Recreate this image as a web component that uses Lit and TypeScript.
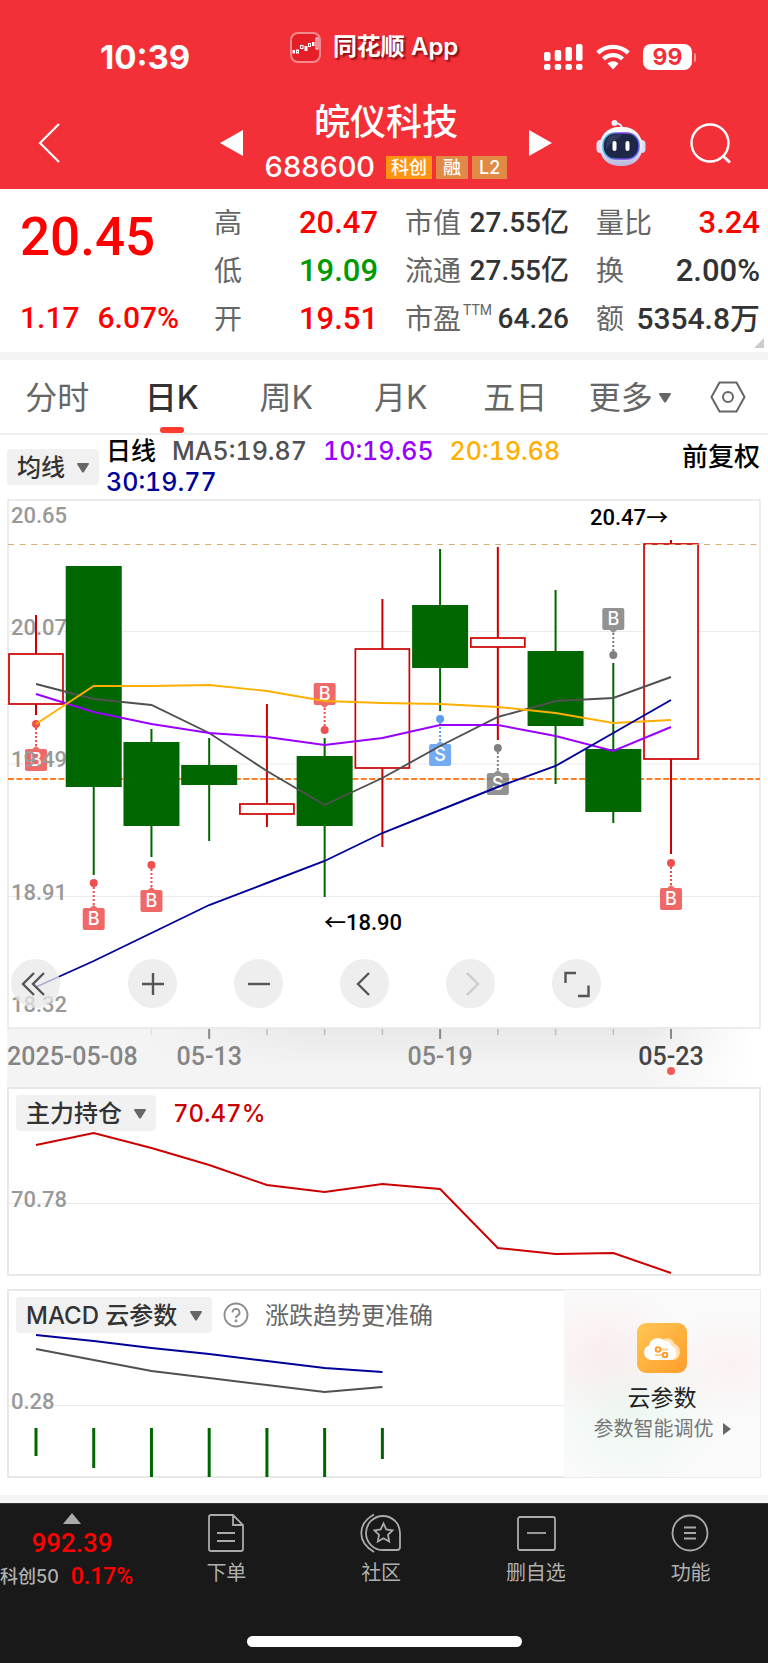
import { LitElement, html, svg, css } from "lit";
import { customElement, state } from "lit/decorators.js";

/* Candle centres are evenly spaced across every chart panel. */
const FIRST = 29;
const STEP = 57.73;
const cx = (i: number) => FIRST + STEP * i;
const points = (ys: number[]) => ys.map((y, i) => `${cx(i).toFixed(1)},${y}`).join(" ");

const RED = "#cc0000";
const GREEN = "#006600";

type Candle = { up: boolean; high: number; top: number; bottom: number; low: number };
const candle = (up: boolean, high: number, top: number, bottom: number, low: number): Candle => ({ up, high, top, bottom, low });
const CANDLES: Candle[] = [
  candle(true, 116, 155, 205, 216),
  candle(false, 67, 67, 288, 376),
  candle(false, 230, 243, 327, 358),
  candle(false, 239, 266, 286, 342),
  candle(true, 205, 305, 315, 328),
  candle(false, 239, 257, 327, 398),
  candle(true, 100, 150, 269, 348),
  candle(false, 50, 106, 169, 212),
  candle(true, 48, 139, 148, 241),
  candle(false, 91, 152, 227, 285),
  candle(false, 164, 250, 313, 324),
  candle(true, 41, 45, 260, 355),
];

const AVERAGES = [
  { color: "#505050", ys: [185, 200, 206, 234, 272, 306, 279, 247, 218, 202, 199, 178] },
  { color: "#9900ff", ys: [195, 213, 225, 234, 238, 246, 239, 226, 226, 237, 252, 228] },
  { color: "#ffaf00", ys: [225, 187, 187, 186, 192, 202, 204, 205, 208, 214, 224, 221] },
  { color: "#000099", ys: [488, 462, 434, 406, 384, 362, 334, 311, 288, 267, 234, 201] },
];

type Mark = { i: number; dot: number; text: string; above?: boolean; color: string };
const MARKS: Mark[] = [
  { i: 0, dot: 225, text: "B", color: "#ee4f4f" },
  { i: 1, dot: 384, text: "B", color: "#ee4f4f" },
  { i: 2, dot: 366, text: "B", color: "#ee4f4f" },
  { i: 5, dot: 231, text: "B", above: true, color: "#ee4f4f" },
  { i: 7, dot: 220, text: "S", color: "#5a9df0" },
  { i: 8, dot: 249, text: "S", color: "#808080" },
  { i: 10, dot: 156, text: "B", above: true, color: "#808080" },
  { i: 11, dot: 364, text: "B", color: "#ee4f4f" },
];

const PRICE_LABELS: [string, number][] = [["20.65", 24], ["20.07", 136], ["19.49", 268], ["18.91", 401], ["18.32", 513]];

const down = html`<svg class="caret" viewBox="0 0 12 10" aria-hidden="true"><path d="M0 1Q0 0 1 0H11Q12 0 12 1L7 9Q6 10 5 9Z" fill="#666" /></svg>`;

@customElement("kline-chart")
export class KlineChart extends LitElement {
  static styles = css`
    :host { display: block; position: relative; }
    .plot { display: block; width: 100%; height: auto; }
    .label { font: 500 22px Roboto, sans-serif; fill: #999; }
    .peak { font: 500 22px Roboto, "Noto Sans CJK SC", sans-serif; fill: #000; }
    .mark { font: 500 18px Inter, sans-serif; fill: #fff; text-anchor: middle; }
    .date { font: 500 25px Roboto, sans-serif; fill: #858585; text-anchor: middle; }
    .date.first { text-anchor: start; }
    .date.current { fill: #444; }
    .tools { position: absolute; left: 4px; top: 460px; display: flex; gap: 57px; }
    .tool { width: 49px; height: 49px; border: 0; border-radius: 50%; padding: 0; background: rgba(232, 232, 232, 0.75); display: grid; place-items: center; }
    .tool:first-child { margin-right: 11px; }
    .tool svg { width: 30px; height: 30px; fill: none; stroke: #555; stroke-width: 2.4; }
    .tool:disabled svg { stroke: #ccc; }
  `;

  private mark(m: Mark) {
    const x = cx(m.i);
    const top = m.above ? m.dot - 47 : m.dot + 25;
    const tip = m.above
      ? `M${x - 5} ${top + 21}L${x} ${top + 25}L${x + 5} ${top + 21}Z`
      : `M${x - 5} ${top + 1}L${x} ${top - 3}L${x + 5} ${top + 1}Z`;
    const from = m.above ? m.dot - 22 : m.dot + 4;
    return svg`
      <circle cx=${x} cy=${m.dot} r="4" fill=${m.color} />
      <path d="M${x} ${from}V${from + 18}" stroke=${m.color} stroke-width="2" stroke-dasharray="2 2" />
      <g opacity="0.85"><rect x=${x - 11} y=${top} width="22" height="22" rx="2" fill=${m.color} /><path d=${tip} fill=${m.color} /></g>
      <text class="mark" x=${x} y=${top + 17}>${m.text}</text>`;
  }

  private bar(c: Candle, i: number) {
    const x = cx(i);
    const color = c.up ? RED : GREEN;
    return svg`
      <path d="M${x} ${c.high}V${c.top}M${x} ${c.bottom}V${c.low}" stroke=${color} stroke-width="2" />
      <rect x=${x - (c.up ? 27 : 28)} y=${c.top} width=${c.up ? 54 : 56} height=${c.bottom - c.top}
        fill=${c.up ? "#fff" : color} stroke=${c.up ? color : "none"} stroke-width="1.7" />`;
  }

  render() {
    return html`
      <svg class="plot" viewBox="0 0 754 588" role="img" aria-label="日K线图">
        <defs>
          <linearGradient id="axis" x1="0" y1="0" x2="0" y2="1"><stop offset="0" stop-color="#e9e9e9" /><stop offset="0.7" stop-color="#f4f4f4" /></linearGradient>
          <linearGradient id="fadeL"><stop offset="0.18" stop-color="#f4f4f4" /><stop offset="0.4" stop-color="#f4f4f4" stop-opacity="0" /></linearGradient>
          <linearGradient id="fadeR"><stop offset="0.84" stop-color="#fff" stop-opacity="0" /><stop offset="0.99" stop-color="#fff" /></linearGradient>
        </defs>
        <rect y="529" width="754" height="59" fill="url(#axis)" />
        <rect y="529" width="754" height="59" fill="url(#fadeL)" />
        <rect y="529" width="754" height="59" fill="url(#fadeR)" />
        <rect x="1" y="1" width="752" height="528" fill="#fff" stroke="#e8e8e8" stroke-width="1.6" />
        <path d="M1 132.5H753M1 265H753M1 397.5H753" stroke="#ebebeb" />
        <path d="M1 280H753" stroke="#ff7f27" stroke-width="2" stroke-dasharray="6 2.4" />
        ${MARKS.map((m) => this.mark(m))}
        ${PRICE_LABELS.map(([t, y]) => svg`<text class="label" x="4" y=${y}>${t}</text>`)}
        ${CANDLES.map((c, i) => this.bar(c, i))}
        <path d="M1 45.5H753" stroke="#d9ad74" stroke-width="1.2" stroke-dasharray="6 5.6" />
        ${AVERAGES.map((a) => svg`<polyline points=${points(a.ys)} fill="none" stroke=${a.color} stroke-width="1.9" />`)}
        <text class="peak" x="583" y="26">20.47→</text>
        <text class="peak" x="317" y="431">←18.90</text>
        ${CANDLES.map((_, i) => {
          if (i < 2) return "";
          const major = i % 4 === 3;
          return svg`<path d="M${cx(i)} 530v${major ? 10 : 6}" stroke=${major ? "#888" : i === 2 ? "#e2e2e2" : "#bbb"} stroke-width=${major ? 2 : 1.5} />`;
        })}
        <text class="date first" x="0" y="566">2025-05-08</text>
        <text class="date" x=${cx(3)} y="566">05-13</text>
        <text class="date" x=${cx(7)} y="566">05-19</text>
        <text class="date current" x=${cx(11)} y="566">05-23</text>
        <circle cx=${cx(11)} cy="572" r="4" fill="#f55a5a" />
      </svg>
      <div class="tools">
        <button class="tool" aria-label="最早"><svg viewBox="0 0 30 30"><path d="M13 4L2 15L13 26M23 4L12 15L23 26" /></svg></button>
        <button class="tool" aria-label="放大"><svg viewBox="0 0 30 30"><path d="M15 4V26M4 15H26" /></svg></button>
        <button class="tool" aria-label="缩小"><svg viewBox="0 0 30 30"><path d="M4 15H26" /></svg></button>
        <button class="tool" aria-label="前移"><svg viewBox="0 0 30 30"><path d="M19 4L8 15L19 26" /></svg></button>
        <button class="tool" aria-label="后移" disabled><svg viewBox="0 0 30 30"><path d="M11 4L22 15L11 26" /></svg></button>
        <button class="tool" aria-label="全屏"><svg viewBox="0 0 30 30"><path d="M3.5 14V4H14M16 27H26.5V16.5" /></svg></button>
      </div>`;
  }
}

@customElement("app-root")
export class AppRoot extends LitElement {
  @state() private tab = "日K";

  static styles = css`
    :host { display: block; background: #fff; font-family: Inter, "Noto Sans CJK SC", sans-serif; color: #333; min-height: 100vh; }
    * { box-sizing: border-box; }
    button, select { font: inherit; color: inherit; background: none; border: 0; padding: 0; margin: 0; }
    svg { display: block; }

    .top { background: #f32f38; color: #fff; }
    .status { display: flex; align-items: center; height: 92px; padding: 22px 72px 0 100px; }
    .time { font-size: 33px; font-weight: 700; line-height: 40px; }
    .brand { display: flex; align-items: center; gap: 12px; margin: 0 auto 20px; padding-left: 14px; font-size: 24px; font-weight: 600; line-height: 32px; text-shadow: 2px 2px 2px rgba(80, 0, 0, 0.7); }
    .logo { width: 31px; height: 31px; }
    .signals { display: flex; align-items: center; gap: 13px; }
    .cells { width: 39px; height: 26px; }
    .wifi { width: 34px; height: 26px; }
    .battery { display: flex; align-items: center; gap: 2px; }
    .charge { width: 49px; height: 26px; border-radius: 8px; background: #fff; color: #f32f38; font-size: 23px; font-weight: 700; line-height: 26px; text-align: center; }
    .nub { width: 2px; height: 9px; border-radius: 0 2px 2px 0; background: #f9979b; }

    .title-bar { display: grid; grid-template-columns: 1fr auto 1fr; gap: 22px; align-items: center; height: 97px; padding-left: 4px; }
    .left, .right { display: flex; align-items: center; justify-content: space-between; padding: 4px 0 0; }
    .left { padding-left: 33px; }
    .right { padding-right: 36px; }
    .back { width: 24px; height: 42px; }
    .arrow { width: 23px; height: 26px; }
    .robot { width: 50px; height: 48px; }
    .search { width: 42px; height: 42px; }
    .title { padding-top: 2px; }
    .name { margin: 0 0 5px; font-size: 36px; font-weight: 500; line-height: 46px; text-align: center; }
    .code-row { display: flex; align-items: center; gap: 4px; }
    .code { font-size: 29px; font-weight: 500; line-height: 34px; margin-right: 7px; }
    .chip { background: #e08a45; font-size: 18px; font-weight: 500; line-height: 23px; padding: 0 7px; }
    .chip.hot { background: #ff9413; padding: 0 5px; }

    .quote { display: flex; padding: 11px 8px 8px 20px; font-family: Roboto, "Noto Sans CJK SC", sans-serif; position: relative; }
    .last { width: 194px; display: flex; flex-direction: column; justify-content: space-between; color: #f00; }
    .price { font-size: 53px; font-weight: 500; line-height: 74px; }
    .change { display: flex; gap: 18px; font-size: 30px; font-weight: 500; line-height: 44px; padding-bottom: 4px; }
    .facts { flex: 1; display: grid; grid-template-columns: repeat(3, 1fr); column-gap: 27px; margin: 0; }
    .fact { display: flex; justify-content: space-between; align-items: center; height: 48px; white-space: nowrap; }
    .fact dt { font-size: 28px; color: #666; line-height: 48px; }
    .fact dd { margin: 0; font-size: 31px; font-weight: 500; line-height: 46px; padding-bottom: 2px; }
    .fact .mid { font-size: 28px; }
    .fact .large { font-size: 30px; }
    .ttm { font-size: 14px; line-height: 14px; vertical-align: 14px; margin-left: 2px; }
    .rise { color: #f00; }
    .fall { color: #009900; }
    .corner { position: absolute; right: 4px; bottom: 4px; width: 10px; height: 10px; }
    .band { height: 8px; background: #f4f4f4; }

    .tabs { display: grid; grid-template-columns: repeat(6, 1fr) 81px; height: 75px; border-bottom: 2px solid #eee; }
    .tab { display: flex; flex-direction: column; align-items: center; justify-content: flex-end; font-size: 32px; line-height: 44px; color: #666; }
    .tab::after { content: ""; width: 24px; height: 6px; border-radius: 3px; margin-top: 7px; }
    .tab.on { font-weight: 500; color: #333; }
    .tab.on::after { background: #ff3b30; }
    .more { display: flex; align-items: center; gap: 6px; }
    .gear { display: grid; place-items: center; }
    .gear svg { width: 36px; height: 36px; }

    .legend { display: grid; grid-template-columns: auto 1fr auto; column-gap: 7px; align-items: start; padding: 1px 8px 0 7px; height: 64px; }
    .pick { display: flex; align-items: center; gap: 12px; height: 36px; padding: 2px 10px 0; border-radius: 4px; background: #f1f1f1; color: #333; font-size: 24px; font-weight: 500; line-height: 34px; }
    .pick select { appearance: none; height: 34px; }
    .legend .pick { margin-top: 13px; }
    .caret { width: 12px; height: 10px; }
    .averages { display: flex; flex-wrap: wrap; column-gap: 16px; padding-right: 24px; font-size: 25px; font-weight: 500; line-height: 31px; font-variant-numeric: tabular-nums; }
    .kind { color: #000; }
    .ma5 { color: #505050; }
    .ma10 { color: #9900ff; }
    .ma20 { color: #ffaf00; }
    .ma30 { color: #000099; }
    .adjust { color: #000; font-size: 26px; font-weight: 500; line-height: 42px; }

    .charts { padding: 0 7px; }
    .panel { position: relative; margin-bottom: 13px; }
    .panel .plot { display: block; width: 100%; height: auto; }
    .label { font: 500 22px Roboto, sans-serif; fill: #999; }
    .head { position: absolute; left: 9px; top: 8px; display: flex; align-items: center; font-size: 24px; line-height: 34px; }
    .share { margin-left: 17px; padding-top: 2px; color: #cc0000; font-weight: 500; font-variant-numeric: tabular-nums; }
    .help { width: 26px; height: 26px; margin: 0 16px 0 11px; }
    .hint { color: #666; padding-top: 2px; }
    .macd { display: flex; margin-bottom: 17px; }
    .macd .graph { flex: 1; }
    .promo { width: 197px; border: 1px solid #ebebeb; border-left: 0; display: flex; flex-direction: column; align-items: center; color: #222; text-decoration: none; background: radial-gradient(ellipse at 20% 35%, rgba(255, 215, 218, 0.35), transparent 40%), radial-gradient(ellipse at 85% 40%, rgba(255, 215, 218, 0.25), transparent 35%), radial-gradient(ellipse at 35% 65%, rgba(215, 245, 230, 0.4), transparent 50%), #fafafa; }
    .cloud { width: 50px; height: 50px; margin: 33px 0 8px; }
    .promo-name { font-size: 23px; line-height: 34px; }
    .promo-note { display: flex; align-items: center; gap: 9px; font-size: 20px; line-height: 28px; color: #777; }
    .play { width: 8px; height: 12px; }

    .dock { background: #191919; color: #b0b0b0; display: grid; grid-template-columns: 149px repeat(4, 1fr); padding-top: 9px; border-top: 1px solid #333; }
    .index { display: flex; flex-direction: column; align-items: center; width: 144px; font-family: Roboto, "Noto Sans CJK SC", sans-serif; }
    .up { width: 18px; height: 11px; margin-bottom: 1px; }
    .index-value { color: #f00; font-size: 26px; font-weight: 500; line-height: 36px; }
    .index-row { display: flex; align-items: center; gap: 12px; align-self: flex-start; font-size: 23px; font-weight: 500; line-height: 32px; color: #f00; white-space: nowrap; }
    .index-name { font-family: Inter, "Noto Sans CJK SC", sans-serif; font-size: 18px; color: #b0b0b0; }
    .item { display: flex; flex-direction: column; align-items: center; font-size: 20px; line-height: 28px; }
    .item svg { width: 42px; height: 40px; margin-bottom: 6px; fill: none; stroke: #aaa; stroke-width: 1.8; }
    .home { background: #191919; padding: 43px 0 16px; }
    .home-bar { width: 275px; height: 11px; margin: 0 auto; border-radius: 6px; background: #fff; }
  `;

  private fact(name: unknown, value: string, cls = "") {
    return html`<div class="fact"><dt>${name}</dt><dd class=${cls}>${value}</dd></div>`;
  }

  render() {
    return html`
      <header class="top">
        <div class="status">
          <span class="time">10:39</span>
          <span class="brand">
            <svg class="logo" viewBox="0 0 31 31" aria-hidden="true">
              <rect x="1" y="1" width="29" height="29" rx="7" fill="#e51f28" stroke="#f58a8e" stroke-width="2" />
              <rect x="2.5" y="18" width="2.5" height="3.5" fill="#fff" /><rect x="6.5" y="18" width="2" height="3" fill="none" stroke="#fff" />
              <rect x="10.5" y="13.5" width="2.5" height="3" fill="none" stroke="#fff" /><rect x="14.5" y="14" width="3" height="5" fill="#fff" />
              <rect x="18.5" y="11.5" width="2" height="3" fill="none" stroke="#fff" /><rect x="22" y="10" width="2.5" height="4" fill="#fff" />
              <rect x="26" y="6" width="2" height="11" fill="none" stroke="#fff" />
            </svg>
            <span>同花顺 App</span>
          </span>
          <div class="signals">
            <svg class="cells" viewBox="0 0 39 26" fill="#fff" aria-label="信号">
              <rect y="8" width="6.5" height="9" rx="2" /><rect x="10.7" y="6" width="6.5" height="11" rx="2" /><rect x="21.4" y="3" width="6.5" height="14" rx="2" /><rect x="32" width="6.5" height="17" rx="2" />
              <rect y="20" width="6.5" height="6" rx="2" /><rect x="10.7" y="20" width="6.5" height="6" rx="2" /><rect x="21.4" y="20" width="6.5" height="6" rx="2" /><rect x="32" y="20" width="6.5" height="6" rx="2" />
            </svg>
            <svg class="wifi" viewBox="0 0 34 26" fill="none" stroke="#fff" stroke-width="4.4" aria-label="无线网络">
              <path d="M1.8 9A22 22 0 0 1 32.2 9" /><path d="M7.5 15A13.5 13.5 0 0 1 26.5 15" />
              <path d="M11.5 19.5A8 8 0 0 1 22.5 19.5L17 25.5Z" fill="#fff" stroke="none" />
            </svg>
            <span class="battery"><span class="charge">99</span><span class="nub"></span></span>
          </div>
        </div>
        <div class="title-bar">
          <div class="left">
            <button aria-label="返回"><svg class="back" viewBox="0 0 24 42"><path d="M22 2L3 21L22 40" fill="none" stroke="#fff" stroke-width="2.2" /></svg></button>
            <button aria-label="上一只"><svg class="arrow" viewBox="0 0 23 26"><path d="M0 13L23 0V26Z" fill="#fff" /></svg></button>
          </div>
          <div class="title">
            <h1 class="name">皖仪科技</h1>
            <div class="code-row"><span class="code">688600</span><span class="chip hot">科创</span><span class="chip">融</span><span class="chip">L2</span></div>
          </div>
          <div class="right">
            <button aria-label="下一只"><svg class="arrow" viewBox="0 0 23 26"><path d="M23 13L0 0V26Z" fill="#fff" /></svg></button>
            <button aria-label="智能助手">
              <svg class="robot" viewBox="0 0 50 48">
                <defs><linearGradient id="shell" x1="0" y1="0" x2="0" y2="1"><stop offset="0" stop-color="#fff" /><stop offset="0.6" stop-color="#e4e4f6" /><stop offset="1" stop-color="#b9b6dd" /></linearGradient>
                <linearGradient id="rim"><stop offset="0" stop-color="#41c4ea" /><stop offset="0.5" stop-color="#7a3fe0" /><stop offset="1" stop-color="#5c6bff" /></linearGradient></defs>
                <path d="M18 4C24 4 26 6 26 10" fill="none" stroke="#e7e7f6" stroke-width="2" /><circle cx="18.5" cy="4" r="3" fill="#f1f1fb" />
                <rect x="0.5" y="21" width="8" height="13" rx="4" fill="#dcdcf4" /><rect x="41.5" y="21" width="8" height="13" rx="4" fill="#dcdcf4" />
                <rect x="3.5" y="8" width="43" height="39" rx="19" fill="url(#shell)" />
                <rect x="7" y="14" width="36" height="26" rx="12" fill="#1d2748" stroke="url(#rim)" stroke-width="1.5" />
                <path d="M14 17Q9 20 10 30Q15 23 27 15.5Q19 15 14 17Z" fill="#3b4568" opacity="0.7" />
                <rect x="16.5" y="22" width="4" height="10" rx="2" fill="#fff" /><rect x="29.5" y="22" width="4" height="10" rx="2" fill="#fff" />
              </svg>
            </button>
            <button aria-label="搜索"><svg class="search" viewBox="0 0 42 42" fill="none" stroke="#fff" stroke-width="2.4"><circle cx="20" cy="21" r="18.5" /><path d="M33 34L40 40.5" stroke-width="3" /></svg></button>
          </div>
        </div>
      </header>

      <section class="quote">
        <div class="last"><span class="price">20.45</span><span class="change"><span>1.17</span><span>6.07%</span></span></div>
        <dl class="facts">
          ${this.fact("高", "20.47", "rise")} ${this.fact("市值", "27.55亿", "mid")} ${this.fact("量比", "3.24", "rise")}
          ${this.fact("低", "19.09", "fall")} ${this.fact("流通", "27.55亿", "mid")} ${this.fact("换", "2.00%")}
          ${this.fact("开", "19.51", "rise")} ${this.fact(html`市盈<span class="ttm">TTM</span>`, "64.26", "mid")} ${this.fact("额", "5354.8万", "large")}
        </dl>
        <svg class="corner" viewBox="0 0 10 10" aria-hidden="true"><path d="M10 0V10H0Z" fill="#ccc" /></svg>
      </section>
      <div class="band"></div>

      <nav class="tabs">
        ${["分时", "日K", "周K", "月K", "五日"].map((t) => html`<button class="tab ${this.tab === t ? "on" : ""}" @click=${() => (this.tab = t)}>${t}</button>`)}
        <button class="tab"><span class="more">更多${down}</span></button>
        <button class="gear" aria-label="设置"><svg viewBox="0 0 36 36" fill="none" stroke="#666" stroke-width="2"><path d="M9.5 3.5H26.5L34.5 18L26.5 32.5H9.5L1.5 18Z" /><circle cx="18" cy="18" r="5" /></svg></button>
      </nav>

      <section class="legend">
        <label class="pick"><select aria-label="主图指标"><option>均线</option></select>${down}</label>
        <div class="averages">
          <span class="kind">日线</span><span class="ma5">MA5:19.87</span><span class="ma10">10:19.65</span><span class="ma20">20:19.68</span><span class="ma30">30:19.77</span>
        </div>
        <button class="adjust">前复权</button>
      </section>

      <main class="charts">
        <kline-chart></kline-chart>
        <section class="panel">
          <svg class="plot" viewBox="0 0 754 189" role="img" aria-label="主力持仓">
            <rect x="1" y="1" width="752" height="187" fill="#fff" stroke="#e8e8e8" stroke-width="2" />
            <path d="M1 116.5H753" stroke="#ebebeb" />
            <text class="label" x="4" y="120">70.78</text>
            <polyline points=${points([58, 46, 61, 78, 98, 105, 97, 102, 161, 167, 166, 186])} fill="none" stroke="#cc0000" stroke-width="2" />
          </svg>
          <div class="head"><label class="pick"><select aria-label="副图指标一"><option>主力持仓</option></select>${down}</label><span class="share">70.47%</span></div>
        </section>
        <section class="panel macd">
          <div class="graph">
            <svg class="plot" viewBox="0 0 557 189" role="img" aria-label="MACD">
              <path d="M557 1H1V188H557" fill="#fff" stroke="#e8e8e8" stroke-width="2" />
              <path d="M1 116.5H557" stroke="#ebebeb" />
              <text class="label" x="4" y="120">0.28</text>
              <polyline points=${points([46, 52, 59, 65, 72, 79, 83])} fill="none" stroke="#000099" stroke-width="2" />
              <polyline points=${points([60, 71, 82, 89, 96, 103, 98])} fill="none" stroke="#505050" stroke-width="2" />
              ${[167, 179, 188, 188, 188, 188, 170].map((y, i) => svg`<path d="M${cx(i)} 139V${y}" stroke=${GREEN} stroke-width="3" />`)}
            </svg>
          </div>
          <a class="promo" href="#cloud">
            <svg class="cloud" viewBox="0 0 50 50" aria-hidden="true">
              <defs><linearGradient id="gold" x1="0" y1="0" x2="1" y2="1"><stop offset="0" stop-color="#ffc655" /><stop offset="1" stop-color="#ff9d2a" /></linearGradient></defs>
              <rect width="50" height="50" rx="9" fill="url(#gold)" />
              <path d="M24 18A8 8 0 0 1 37.5 21A8.5 8.5 0 0 1 37 37H20Z" fill="#ffe3b5" />
              <path d="M14 37A7.5 7.5 0 0 1 12 22.5A9 9 0 0 1 27.5 18A7 7 0 0 1 34.5 23A7.5 7.5 0 0 1 34 37Z" fill="#fff" />
              <path d="M18 26.5H31M18 32H31" stroke="#ffd18c" stroke-width="2" /><circle cx="21" cy="26.5" r="2.3" fill="#fff" stroke="#ff9d2a" stroke-width="2" /><circle cx="28" cy="32" r="2.3" fill="#fff" stroke="#ff9d2a" stroke-width="2" />
            </svg>
            <span class="promo-name">云参数</span>
            <span class="promo-note">参数智能调优<svg class="play" viewBox="0 0 8 12"><path d="M0 0L8 6L0 12Z" fill="#666" /></svg></span>
          </a>
          <div class="head">
            <label class="pick"><select aria-label="副图指标二"><option>MACD 云参数</option></select>${down}</label>
            <svg class="help" viewBox="0 0 26 26" fill="none" stroke="#8c8c8c" stroke-width="1.8" aria-label="帮助"><circle cx="13" cy="13" r="11.5" /><path d="M9.5 10.5A3.5 3.5 0 1 1 14.5 13.6Q13 14.4 13 16" /><circle cx="13" cy="18.7" r="0.6" /></svg>
            <span class="hint">涨跌趋势更准确</span>
          </div>
        </section>
      </main>
      <div class="band"></div>

      <footer>
        <nav class="dock">
          <div class="index">
            <svg class="up" viewBox="0 0 18 11" aria-hidden="true"><path d="M9 0L18 11H0Z" fill="#aaa" /></svg>
            <span class="index-value">992.39</span>
            <span class="index-row"><span class="index-name">科创50</span><span>0.17%</span></span>
          </div>
          <button class="item"><svg viewBox="0 0 42 40"><path d="M6 2H28L38 12V36Q38 38 36 38H6Q4 38 4 36V4Q4 2 6 2ZM28 2V12H38M12 20H30M12 28H30" /></svg>下单</button>
          <button class="item"><svg viewBox="0 0 42 40"><path d="M14 1.5C-3 11 -3 29 14 39M40 20V34Q40 37 37 37H23A17 17 0 1 1 40 20Z" /><path d="M23.5 10.5L26.3 16.5L32.5 17.3L28 21.8L29.2 28.5L23.5 25.2L17.8 28.5L19 21.8L14.5 17.3L20.7 16.5Z" /></svg>社区</button>
          <button class="item"><svg viewBox="0 0 42 40"><rect x="3" y="4" width="37" height="33" rx="2" /><path d="M12 20H31" /></svg>删自选</button>
          <button class="item"><svg viewBox="0 0 42 40"><circle cx="20" cy="20" r="17.5" /><path d="M14 14.5H26M14 20H26M14 25.5H26" /></svg>功能</button>
        </nav>
        <div class="home"><div class="home-bar"></div></div>
      </footer>`;
  }
}
